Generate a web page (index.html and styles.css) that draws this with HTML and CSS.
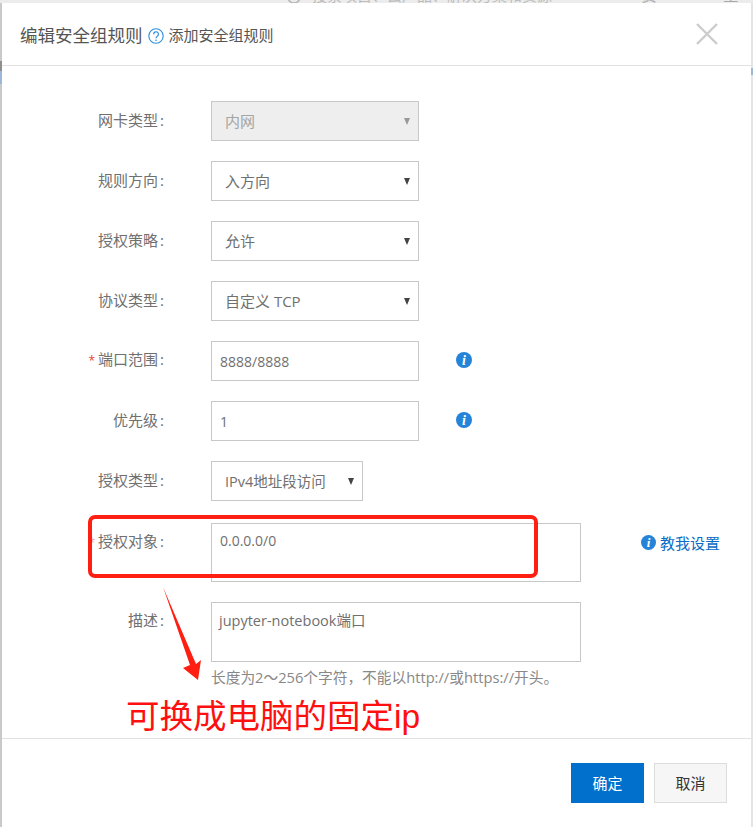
FILE: index.html
```html
<!DOCTYPE html>
<html lang="zh-CN">
  <head>
    <meta charset="UTF-8" />
    <title>编辑安全组规则</title>
    <link rel="stylesheet" href="styles.css">
  </head>
  <body>
    <div class="backdrop">
      <svg class="search-icon" width="16" height="16" viewBox="0 0 16 16">
        <circle cx="7" cy="-3" r="6" fill="none" stroke="#b5b5b5" stroke-width="1.5" />
      </svg>
      <span class="backdrop-text">搜索项目、云产品、解决方案和资源</span>
      <span class="backdrop-link">费用</span>
      <span class="backdrop-link last">工单</span>
    </div>
    <div class="side-tab"></div>
    <div class="side-tab-blue"></div>
    <div class="side-tab-right"></div>

    <div class="modal">
      <div class="modal-header">
        <h2>编辑安全组规则</h2>
        <svg class="help-icon" width="16" height="16" viewBox="0 0 16 16">
          <circle cx="8" cy="8" r="7.2" fill="none" stroke="#2e8fdc" stroke-width="1.1" />
          <path d="M5.6 6.2a2.4 2.4 0 1 1 3.7 2c-.9.6-1.3 1-1.3 2" fill="none" stroke="#2e8fdc" stroke-width="1.2" />
          <circle cx="8" cy="12.2" r=".8" fill="#2e8fdc" />
        </svg>
        <span class="header-link">添加安全组规则</span>
        <svg class="close-icon" width="22" height="22" viewBox="0 0 22 22">
          <path d="M1 1l20 20M21 1L1 21" stroke="#cccccc" stroke-width="2.4" fill="none" />
        </svg>
      </div>

      <div class="modal-body">
        <div class="form-row">
          <label>网卡类型<span class="colon">:</span></label>
          <div class="select disabled"><span>内网</span><i class="caret"></i></div>
        </div>
        <div class="form-row">
          <label>规则方向<span class="colon">:</span></label>
          <div class="select"><span>入方向</span><i class="caret"></i></div>
        </div>
        <div class="form-row">
          <label>授权策略<span class="colon">:</span></label>
          <div class="select"><span>允许</span><i class="caret"></i></div>
        </div>
        <div class="form-row">
          <label>协议类型<span class="colon">:</span></label>
          <div class="select"><span>自定义 TCP</span><i class="caret"></i></div>
        </div>
        <div class="form-row">
          <label><em>*</em>端口范围<span class="colon">:</span></label>
          <div class="input">8888/8888</div>
          <svg class="info-icon" width="16" height="16" viewBox="0 0 16 16">
            <circle cx="8" cy="8" r="8" fill="#2583d8" />
            <text x="8" y="12.5" text-anchor="middle" class="info-i">i</text>
          </svg>
        </div>
        <div class="form-row">
          <label>优先级<span class="colon">:</span></label>
          <div class="input">1</div>
          <svg class="info-icon" width="16" height="16" viewBox="0 0 16 16">
            <circle cx="8" cy="8" r="8" fill="#2583d8" />
            <text x="8" y="12.5" text-anchor="middle" class="info-i">i</text>
          </svg>
        </div>
        <div class="form-row">
          <label>授权类型<span class="colon">:</span></label>
          <div class="select short"><span>IPv4地址段访问</span><i class="caret"></i></div>
        </div>
        <div class="form-row area-row first-area">
          <label><em class="faded">*</em>授权对象<span class="colon">:</span></label>
          <div class="textarea">0.0.0.0/0</div>
          <div class="teach">
            <svg width="15" height="15" viewBox="0 0 16 16">
              <circle cx="8" cy="8" r="8" fill="#2583d8" />
              <text x="8" y="12.5" text-anchor="middle" class="info-i">i</text>
            </svg>
            <span>教我设置</span>
          </div>
        </div>
        <div class="form-row area-row">
          <label>描述<span class="colon">:</span></label>
          <div class="textarea">jupyter-notebook端口</div>
        </div>
        <p class="hint">长度为2～256个字符，不能以http://或https://开头。</p>
      </div>

      <div class="modal-footer">
        <button class="btn primary">确定</button>
        <button class="btn">取消</button>
      </div>
    </div>

    <!-- red marks drawn over the screenshot -->
    <div class="mark-box"></div>
    <svg class="mark-arrow" width="50" height="100" viewBox="0 0 50 100">
      <polygon points="3,1 30,79 23,82 38,94 41,74 36,78" fill="#fe1e12" />
    </svg>
    <div class="mark-text">可换成电脑的固定ip</div>
  </body>
</html>
```

FILE: styles.css
```css
* {
  box-sizing: border-box;
  margin: 0;
  padding: 0;
}

body {
  width: 753px;
  height: 827px;
  overflow: hidden;
  position: relative;
  background: linear-gradient(90deg, #c9c9c9 2px, #e4e4e4 2px);
  font-family: "Open Sans", "Noto Sans CJK SC", sans-serif;
  font-size: 15px;
  color: #666;
}

.backdrop {
  height: 3px;
  overflow: hidden;
  display: flex;
  background-color: #ececec;
  color: #bdbdbd;
  font-size: 15px;
  line-height: 16px;
}

.backdrop > * {
  margin-top: -13px;
}

.search-icon {
  margin-left: 287px;
  margin-top: 0;
  flex-shrink: 0;
}

.backdrop-text {
  margin-left: 9px;
  width: 333px;
  white-space: nowrap;
}

.backdrop-link {
  color: #aaa;
}

.backdrop-link.last {
  margin-left: 52px;
}

.side-tab,
.side-tab-blue,
.side-tab-right {
  position: absolute;
  left: 0;
  width: 2px;
}

.side-tab {
  top: 61px;
  height: 10px;
  background-color: #8f8f8f;
}

.side-tab-blue {
  top: 71px;
  height: 13px;
  background-color: #9db8d6;
}

.side-tab-right {
  left: 751px;
  top: 68px;
  height: 7px;
  background-color: #9db8d6;
}

.modal {
  position: relative;
  width: 749px;
  height: 824px;
  margin-left: 2px;
  background-color: #fff;
  display: flex;
  flex-direction: column;
}

.modal-header {
  height: 63px;
  flex-shrink: 0;
  display: flex;
  align-items: center;
  padding: 0 33px 0 18px;
  border-bottom: 1px solid #e1e1e1;
}

.modal-header h2 {
  font-size: 17.5px;
  font-weight: normal;
  color: #555;
}

.help-icon {
  margin: 3px 5px 0 5px;
}

.header-link {
  font-size: 15px;
  color: #555;
}

.close-icon {
  margin-left: auto;
  margin-top: -1px;
}

.modal-body {
  flex: 1;
  padding-top: 35px;
}

.form-row {
  display: flex;
  align-items: center;
  height: 40px;
  margin-bottom: 20px;
}

.form-row label {
  width: 162px;
  flex-shrink: 0;
  text-align: right;
  color: #707070;
  margin-right: 47px;
  font-size: 15px;
  line-height: 20px;
  margin-top: -2px;
  white-space: nowrap;
}

.colon {
  margin-left: 2px;
}

.form-row label em {
  color: #e8423a;
  font-style: normal;
  font-size: 12px;
  margin-right: 3px;
}

.form-row label em.faded {
  color: #e99;
}

.select,
.input,
.textarea {
  border: 1px solid #c8c8c8;
  background-color: #fff;
  color: #707070;
  font-size: 15px;
}

.select {
  width: 208px;
  height: 40px;
  display: flex;
  align-items: center;
  justify-content: space-between;
  padding: 0 8px 2px 13px;
}

.select.short {
  width: 152px;
  font-size: 14.5px;
}

.select.disabled {
  background-color: #eee;
  color: #a5a5a5;
}

.caret {
  width: 0;
  height: 0;
  border-left: 3.5px solid transparent;
  border-right: 3.5px solid transparent;
  border-top: 7px solid #444;
  margin-top: 2px;
}

.select.disabled .caret {
  border-top-color: #999;
}

.input {
  width: 208px;
  height: 40px;
  line-height: 39px;
  padding-left: 8px;
  font-size: 14px;
}

.info-icon {
  margin-left: 37px;
  margin-top: -2px;
}

.info-i {
  font-family: "Liberation Serif", serif;
  font-size: 14px;
  font-weight: bold;
  font-style: italic;
  fill: #fff;
}

.area-row {
  height: 60px;
  align-items: flex-start;
}

.first-area {
  height: 59px;
  margin-top: 22px;
}

.area-row label {
  margin-top: 0;
  padding-top: 8px;
}

.textarea {
  width: 370px;
  height: 60px;
  padding: 8px 7px;
  line-height: 20px;
  font-size: 14.5px;
}

.first-area .textarea {
  height: 59px;
  font-size: 14px;
  padding: 7px 8px;
}

.teach {
  display: flex;
  align-items: center;
  gap: 4px;
  margin: 9px 0 0 60px;
  color: #0a6cc4;
  font-size: 15px;
  white-space: nowrap;
}

.hint {
  margin: -14px 0 0 209px;
  font-size: 14.7px;
  color: #888;
  line-height: 18px;
  white-space: nowrap;
}

.modal-footer {
  height: 89px;
  flex-shrink: 0;
  border-top: 1px solid #e1e1e1;
  display: flex;
  justify-content: flex-end;
  gap: 10px;
  padding: 24px 24px 0 0;
}

.btn {
  width: 73px;
  height: 40px;
  border: 1px solid #ddd;
  background-color: #f6f6f6;
  color: #333;
  font-family: inherit;
  font-size: 15px;
  padding-bottom: 2px;
}

.btn.primary {
  background-color: #0070cc;
  border-color: #0070cc;
  color: #fff;
}

.mark-box {
  position: absolute;
  left: 88px;
  top: 515px;
  width: 450px;
  height: 63px;
  border: 4px solid #fe1e12;
  border-radius: 7px;
}

.mark-arrow {
  position: absolute;
  left: 160px;
  top: 586px;
}

.mark-text {
  position: absolute;
  left: 126px;
  top: 696px;
  font-family: "Liberation Sans", "Noto Sans CJK SC", sans-serif;
  font-size: 33.5px;
  line-height: 42px;
  color: #fe1010;
  white-space: nowrap;
}
```
